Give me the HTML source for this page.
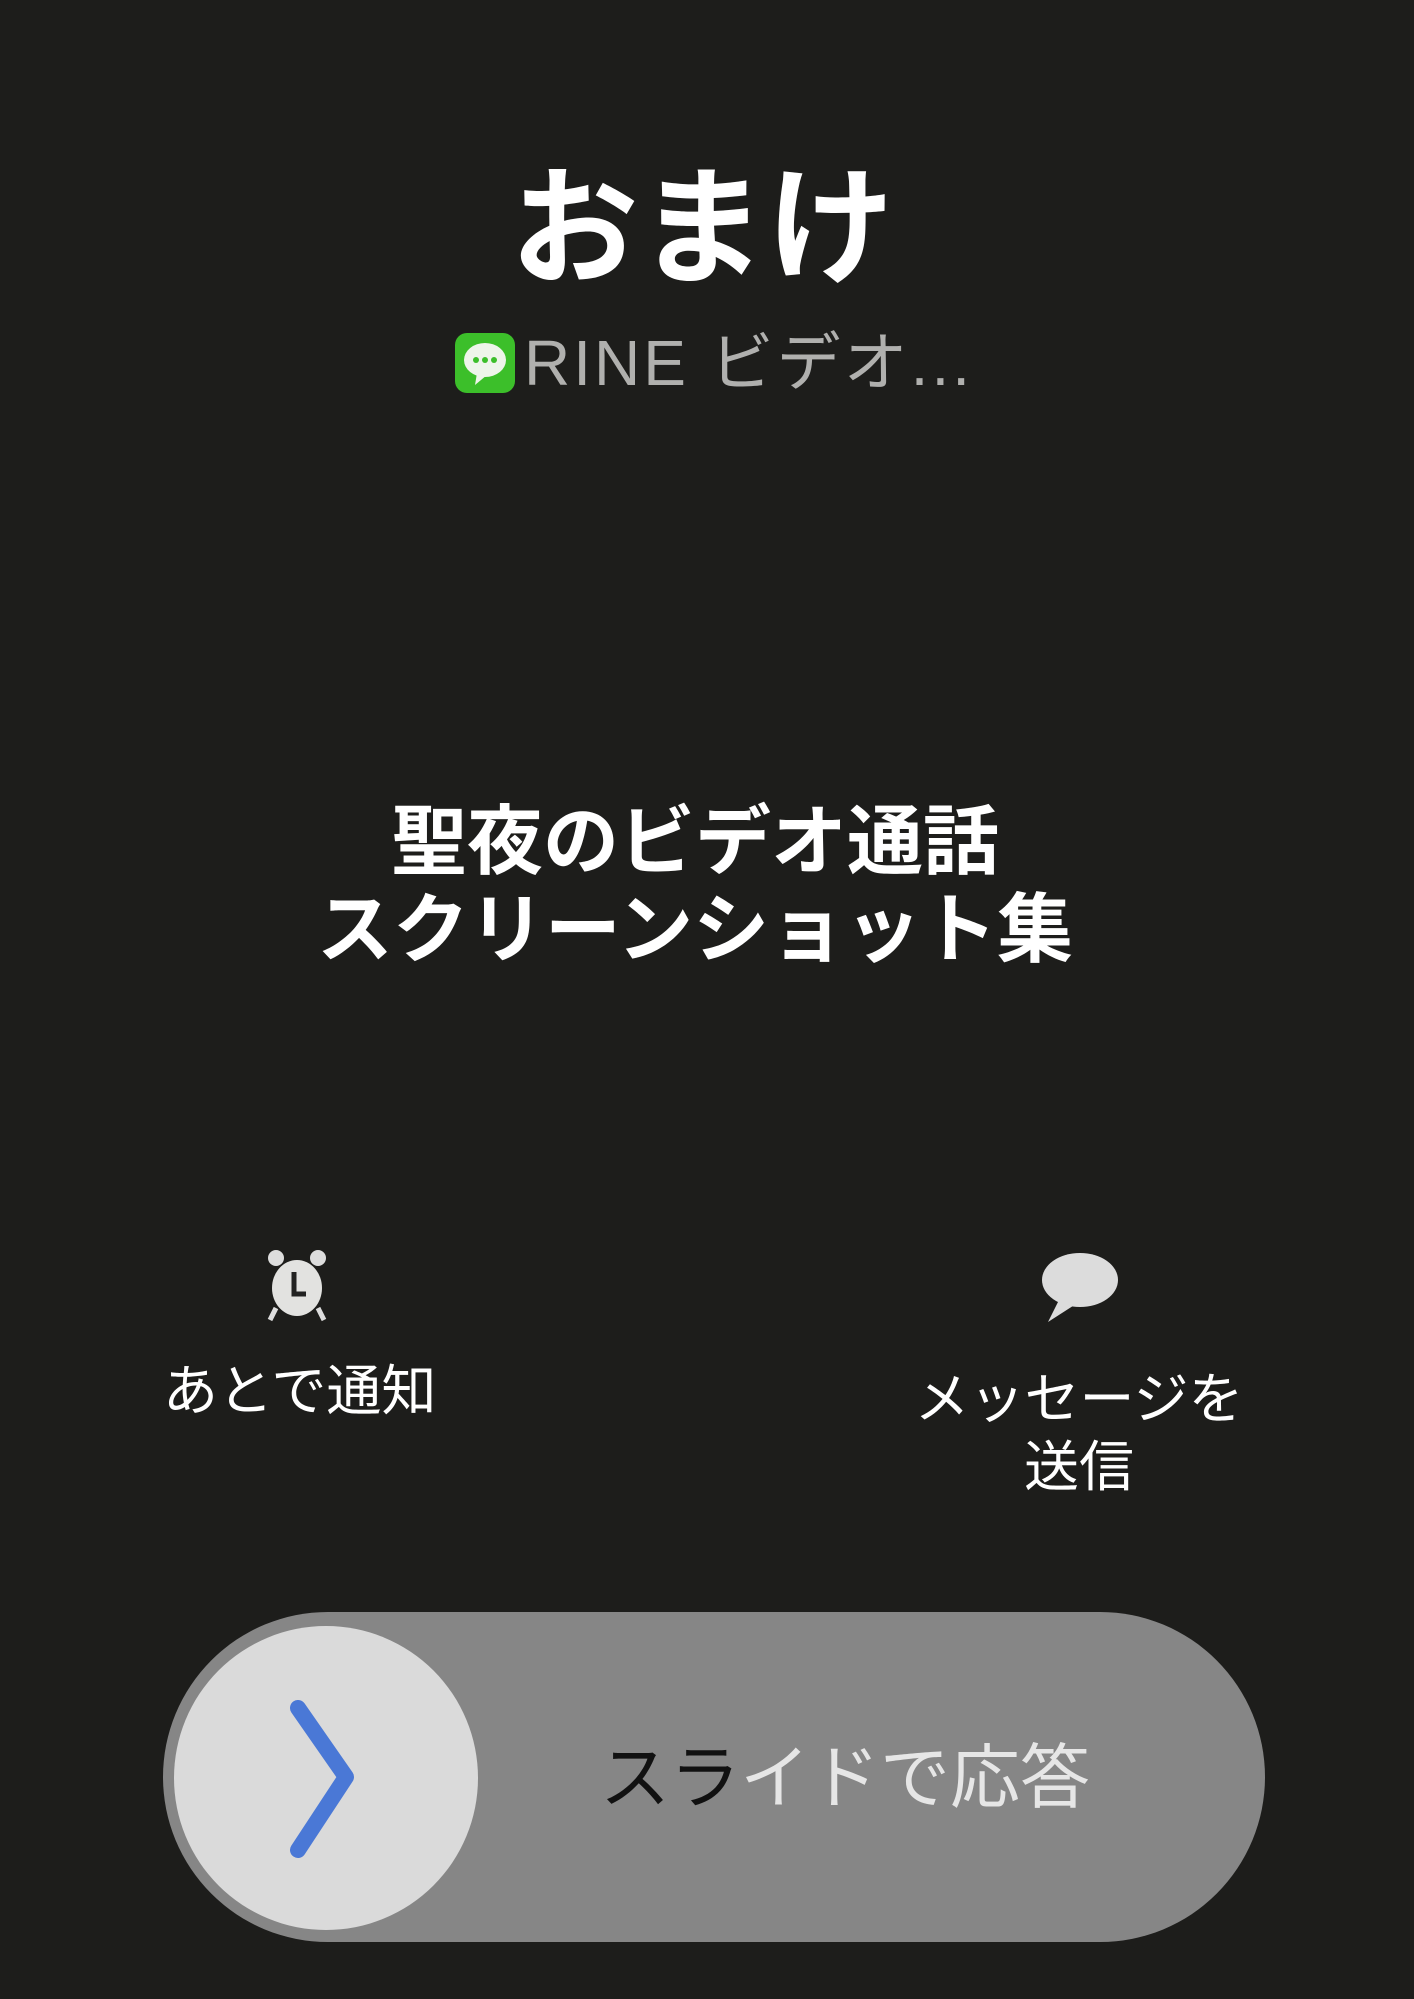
<!DOCTYPE html>
<html><head><meta charset="utf-8"><style>
html,body{margin:0;padding:0}
body{width:1414px;height:1999px;background:#1d1d1b;position:relative;overflow:hidden;font-family:"Liberation Sans","Noto Sans CJK JP",sans-serif;}
.a{position:absolute;white-space:nowrap}
</style></head><body>
<div class="a" style="left:0;top:145px;width:1405px;text-align:center;font-size:128px;font-weight:bold;color:#fff;line-height:170px">おまけ</div>
<svg class="a" style="left:455px;top:333px" width="60" height="60" viewBox="0 0 60 60">
<rect x="0" y="0" width="60" height="60" rx="12" fill="#3cbf2a"/>
<ellipse cx="30" cy="27" rx="21" ry="17" fill="#eef5ea"/>
<path d="M22 40 L20 52 L32 42 Z" fill="#eef5ea"/>
<circle cx="21" cy="27" r="3" fill="#3cbf2a"/><circle cx="30" cy="27" r="3" fill="#3cbf2a"/><circle cx="39" cy="27" r="3" fill="#3cbf2a"/>
</svg>
<div class="a" style="left:524px;top:323px;font-size:64px;letter-spacing:3px;color:#b0b0ae;line-height:80px">RINE ビデオ...</div>
<div class="a" style="left:0;top:799px;width:1390px;text-align:center;font-size:76px;font-weight:bold;color:#fff;line-height:88px">聖夜のビデオ通話<br>スクリーンショット集</div>
<svg class="a" style="left:262px;top:1248px" width="70" height="76" viewBox="0 0 70 76">
<circle cx="14" cy="10" r="8" fill="#ddd"/><circle cx="56" cy="10" r="8" fill="#ddd"/>
<path d="M14 60 L8 72 M56 60 L62 72" stroke="#ddd" stroke-width="5"/>
<ellipse cx="35" cy="40" rx="25" ry="28" fill="#e2e2e0"/>
<path d="M32 24 V46 H44" stroke="#222" stroke-width="5" fill="none"/>
</svg>
<div class="a" style="left:163px;top:1358px;font-size:55px;color:#fff;line-height:66px">あとで通知</div>
<svg class="a" style="left:1038px;top:1250px" width="82" height="76" viewBox="0 0 82 76">
<ellipse cx="42" cy="30" rx="38" ry="27" fill="#dcdcdc"/>
<path d="M22 48 L10 72 L38 54 Z" fill="#dcdcdc"/>
</svg>
<div class="a" style="left:899px;top:1365px;width:360px;text-align:center;font-size:55px;color:#fff;line-height:68px">メッセージを<br>送信</div>
<div class="a" style="left:163px;top:1612px;width:1102px;height:330px;border-radius:165px;background:#868686;"></div>
<div class="a" style="left:174px;top:1626px;width:304px;height:304px;border-radius:50%;background:#dadada;"></div>
<svg class="a" style="left:280px;top:1700px" width="80" height="160" viewBox="0 0 80 160">
<path d="M18 8 L66 77 L18 150" stroke="#4a78d6" stroke-width="16" fill="none" stroke-linecap="round" stroke-linejoin="round"/>
</svg>
<div class="a" style="left:600px;top:1733px;font-size:70px;line-height:90px;color:#e6e6e6"><span style="color:#111">スラ</span>イドで応答</div>
</body></html>
